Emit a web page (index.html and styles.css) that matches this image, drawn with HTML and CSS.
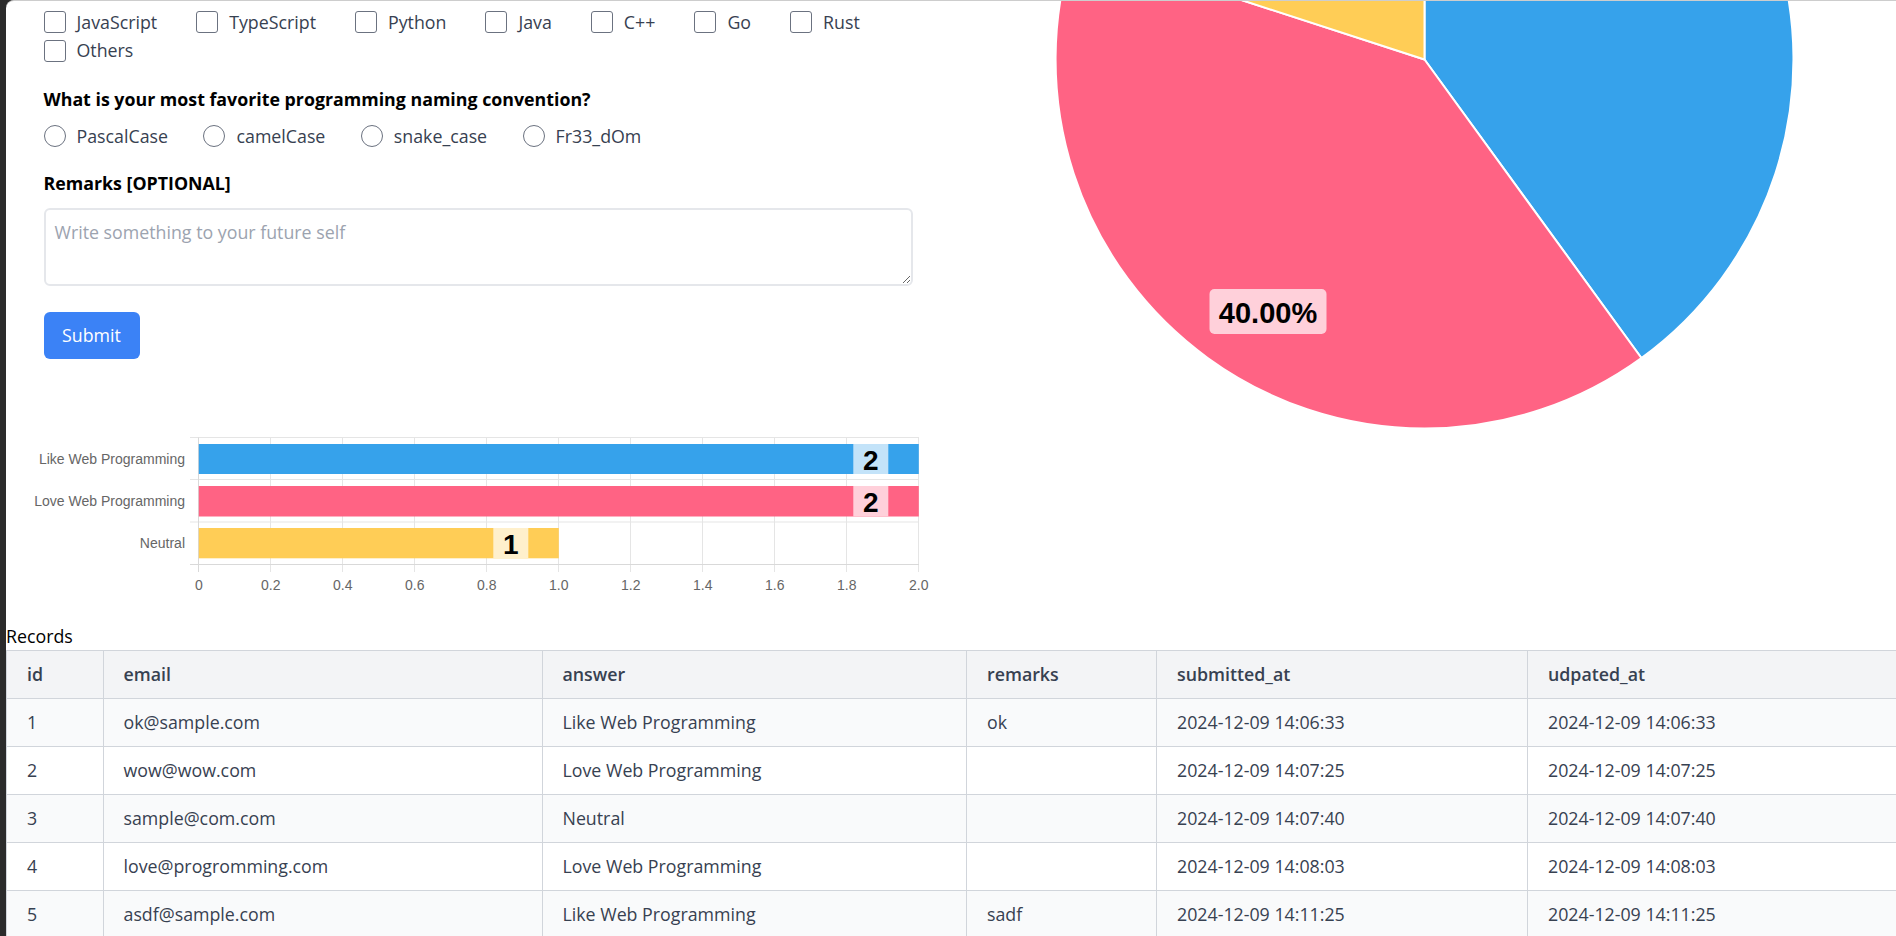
FILE: index.html
```html
<!DOCTYPE html>
<html lang="en">
<head>
<meta charset="utf-8">
<title>Survey</title>
<link rel="stylesheet" href="styles.css">
</head>
<body>
<div class="window">
  <div class="top">
    <div class="left">
      <form class="form">
        <div class="options checks">
          <label class="opt"><input type="checkbox"><span>JavaScript</span></label>
          <label class="opt"><input type="checkbox"><span>TypeScript</span></label>
          <label class="opt"><input type="checkbox"><span>Python</span></label>
          <label class="opt"><input type="checkbox"><span>Java</span></label>
          <label class="opt"><input type="checkbox"><span>C++</span></label>
          <label class="opt"><input type="checkbox"><span>Go</span></label>
          <label class="opt"><input type="checkbox"><span>Rust</span></label>
          <label class="opt"><input type="checkbox"><span>Others</span></label>
        </div>
        <h3 class="question">What is your most favorite programming naming convention?</h3>
        <div class="options radios">
          <label class="opt"><input type="radio" name="conv"><span>PascalCase</span></label>
          <label class="opt"><input type="radio" name="conv"><span>camelCase</span></label>
          <label class="opt"><input type="radio" name="conv"><span>snake_case</span></label>
          <label class="opt"><input type="radio" name="conv"><span>Fr33_dOm</span></label>
        </div>
        <h3 class="question remarks-title">Remarks [OPTIONAL]</h3>
        <textarea class="remarks" placeholder="Write something to your future self"></textarea>
        <button class="submit" type="button">Submit</button>
      </form>
      <svg class="bar-chart" viewBox="0 0 930 202" xmlns="http://www.w3.org/2000/svg">
        <g class="grid">
          <line x1="192.5" y1="17.5" x2="192.5" y2="152"/>
          <line x1="264.5" y1="17.5" x2="264.5" y2="152"/>
          <line x1="336.5" y1="17.5" x2="336.5" y2="152"/>
          <line x1="408.5" y1="17.5" x2="408.5" y2="152"/>
          <line x1="480.5" y1="17.5" x2="480.5" y2="152"/>
          <line x1="552.5" y1="17.5" x2="552.5" y2="152"/>
          <line x1="624.5" y1="17.5" x2="624.5" y2="152"/>
          <line x1="696.5" y1="17.5" x2="696.5" y2="152"/>
          <line x1="768.5" y1="17.5" x2="768.5" y2="152"/>
          <line x1="840.5" y1="17.5" x2="840.5" y2="152"/>
          <line x1="912.5" y1="17.5" x2="912.5" y2="152"/>
          <line x1="184" y1="17.5" x2="913" y2="17.5"/>
          <line x1="184" y1="59.5" x2="913" y2="59.5"/>
          <line x1="184" y1="102" x2="913" y2="102"/>
          <line class="axis" x1="184" y1="144.5" x2="913" y2="144.5"/>
          <line class="axis" x1="192.5" y1="17.5" x2="192.5" y2="152"/>
        </g>
        <rect class="bar-blue" x="192.8" y="24" width="720" height="30"/>
        <rect class="bar-pink" x="192.8" y="66" width="720" height="30.5"/>
        <rect class="bar-yellow" x="192.8" y="108" width="360" height="30.3"/>
        <rect class="box-blue" x="847.3" y="24" width="35" height="30"/>
        <rect class="box-pink" x="847.3" y="66" width="35" height="30.5"/>
        <rect class="box-yellow" x="487.3" y="108" width="35" height="30.3"/>
        <g class="data-label">
          <text x="864.8" y="40">2</text>
          <text x="864.8" y="82">2</text>
          <text x="504.8" y="124">1</text>
        </g>
        <g class="cat-label">
          <text x="179" y="39">Like Web Programming</text>
          <text x="179" y="81.3">Love Web Programming</text>
          <text x="179" y="123.2">Neutral</text>
        </g>
        <g class="tick-label">
          <text x="192.8" y="165">0</text>
          <text x="264.8" y="165">0.2</text>
          <text x="336.8" y="165">0.4</text>
          <text x="408.8" y="165">0.6</text>
          <text x="480.8" y="165">0.8</text>
          <text x="552.8" y="165">1.0</text>
          <text x="624.8" y="165">1.2</text>
          <text x="696.8" y="165">1.4</text>
          <text x="768.8" y="165">1.6</text>
          <text x="840.8" y="165">1.8</text>
          <text x="912.8" y="165">2.0</text>
        </g>
      </svg>
    </div>
    <div class="right">
      <svg class="pie-chart" viewBox="0 0 896 440" xmlns="http://www.w3.org/2000/svg">
        <path class="slice-blue" d="M424.5,58.5 L424.5,-310.5 A369,369 0 0 1 641.4,357 Z"/>
        <path class="slice-pink" d="M424.5,58.5 L641.4,357 A369,369 0 0 1 73.6,-55.5 Z"/>
        <path class="slice-yellow" d="M424.5,58.5 L73.6,-55.5 A369,369 0 0 1 424.5,-310.5 Z"/>
        <rect class="pie-box" x="209.5" y="288" width="117" height="45" rx="5"/>
        <text class="pie-label" x="268" y="311.5">40.00%</text>
      </svg>
    </div>
  </div>
  <div class="records-title">Records</div>
  <table class="records">
    <colgroup>
      <col class="c-id"><col class="c-email"><col class="c-answer"><col class="c-remarks"><col class="c-sub"><col class="c-upd">
    </colgroup>
    <thead>
      <tr><th>id</th><th>email</th><th>answer</th><th>remarks</th><th>submitted_at</th><th>udpated_at</th></tr>
    </thead>
    <tbody>
      <tr><td>1</td><td>ok@sample.com</td><td>Like Web Programming</td><td>ok</td><td>2024-12-09 14:06:33</td><td>2024-12-09 14:06:33</td></tr>
      <tr><td>2</td><td>wow@wow.com</td><td>Love Web Programming</td><td></td><td>2024-12-09 14:07:25</td><td>2024-12-09 14:07:25</td></tr>
      <tr><td>3</td><td>sample@com.com</td><td>Neutral</td><td></td><td>2024-12-09 14:07:40</td><td>2024-12-09 14:07:40</td></tr>
      <tr><td>4</td><td>love@progromming.com</td><td>Love Web Programming</td><td></td><td>2024-12-09 14:08:03</td><td>2024-12-09 14:08:03</td></tr>
      <tr><td>5</td><td>asdf@sample.com</td><td>Like Web Programming</td><td>sadf</td><td>2024-12-09 14:11:25</td><td>2024-12-09 14:11:25</td></tr>
    </tbody>
  </table>
</div>
</body>
</html>
```

FILE: styles.css
```css
* { box-sizing: border-box; }
html, body { margin: 0; padding: 0; }
body {
  background: #2b2b2b;
  font-family: "Open Sans", "Noto Sans", sans-serif;
  font-size: 17.8px;
  height: 936px;
  overflow: hidden;
}
.window {
  margin-left: 6px;
  background: #fff;
  border-top: 1px solid #cdcdcd;
  border-top-left-radius: 8px;
  min-height: 935px;
}
.top { display: flex; }
.left { width: 994px; flex: none; }
.right { flex: 1; }
.form { padding: 6.75px 0 0 37.5px; width: 907px; }

.options {
  display: flex;
  flex-wrap: wrap;
  column-gap: 39px;
  width: 869.5px;
}
.radios { column-gap: 35.5px; }
.opt {
  display: flex;
  align-items: center;
  gap: 11px;
  height: 28.5px;
  line-height: 28.5px;
  color: #374151;
}
.opt input {
  appearance: none;
  -webkit-appearance: none;
  width: 22px;
  height: 22px;
  margin: 0;
  border: 1.5px solid #6b7280;
  border-radius: 3px;
  background: #fff;
  flex: none;
}
.radios input { border-radius: 50%; }

.question {
  margin: 20.75px 0 0;
  font-size: 17.8px;
  font-weight: 700;
  line-height: 27px;
  color: #000;
}
.radios { margin-top: 9px; }
.remarks-title { margin-top: 19.5px; }
.remarks {
  display: block;
  margin-top: 11.2px;
  width: 869.5px;
  height: 78px;
  border: 2px solid #e5e7eb;
  border-radius: 6px;
  padding: 9px 9px;
  font: inherit;
  line-height: 27px;
  color: #374151;
  resize: vertical;
}
.remarks::placeholder { color: #9ca3af; }
.submit {
  display: block;
  margin-top: 26.3px;
  width: 96px;
  height: 47px;
  padding: 0;
  background: #3b82f6;
  color: #fff;
  border: 0;
  border-radius: 6px;
  font: inherit;
}

.bar-chart { display: block; margin-top: 61px; width: 930px; height: 202px; }
.grid line { stroke: #e5e5e5; stroke-width: 1; }
.grid line.axis { stroke: #d9d9d9; }
.bar-blue { fill: #36a2eb; }
.bar-pink { fill: #ff6384; }
.bar-yellow { fill: #ffcd56; }
.box-blue { fill: #c3e3f9; }
.box-pink { fill: #ffd0da; }
.box-yellow { fill: #fff0cc; }
.data-label text {
  font-family: "Liberation Sans", Arial, sans-serif;
  font-weight: 700;
  font-size: 28px;
  fill: #000;
  text-anchor: middle;
  dominant-baseline: central;
}
.cat-label text {
  font-family: "Liberation Sans", Arial, sans-serif;
  font-size: 14px;
  fill: #666;
  text-anchor: end;
  dominant-baseline: central;
}
.tick-label text {
  font-family: "Liberation Sans", Arial, sans-serif;
  font-size: 14px;
  fill: #666;
  text-anchor: middle;
  dominant-baseline: central;
}

.pie-chart { display: block; width: 896px; height: 440px; }
.slice-blue { fill: #36a2eb; stroke: #fff; stroke-width: 2; }
.slice-pink { fill: #ff6384; stroke: #fff; stroke-width: 2; }
.slice-yellow { fill: #ffcd56; stroke: #fff; stroke-width: 2; }
.pie-box { fill: #ffd0da; }
.pie-label {
  font-family: "Liberation Sans", Arial, sans-serif;
  font-weight: 700;
  font-size: 29px;
  fill: #000;
  text-anchor: middle;
  dominant-baseline: central;
}

.records-title { height: 28px; line-height: 28px; color: #000; }
.records {
  border-collapse: collapse;
  table-layout: fixed;
  width: 1890px;
  color: #374151;
}
.c-id { width: 96.5px; }
.c-email { width: 439px; }
.c-answer { width: 424.5px; }
.c-remarks { width: 190px; }
.c-sub { width: 371px; }
.c-upd { width: 369px; }
.records th, .records td {
  height: 48px;
  padding: 0 20px;
  text-align: left;
  border: 1px solid #d1d5db;
  white-space: nowrap;
}
.records thead th { background: #f3f4f6; font-weight: 600; }
.records tbody tr:nth-child(odd) td { background: #f9fafb; }
```
